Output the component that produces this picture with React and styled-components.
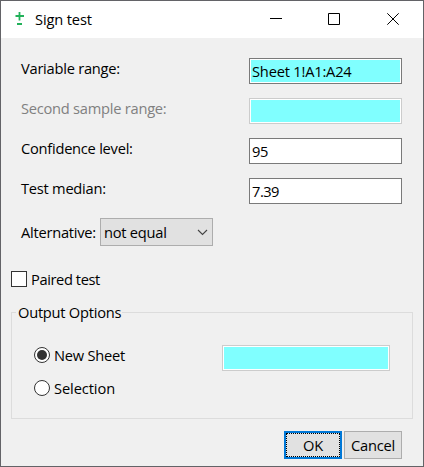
import React from "react";
import styled, { createGlobalStyle } from "styled-components";

const GlobalStyle = createGlobalStyle`
  * { box-sizing: border-box; }
  body { margin: 0; }
`;

const Dialog = styled.main`
  width: 424px;
  height: 467px;
  overflow: hidden;
  border: 1px solid #636367;
  background: #f0f0f0;
  color: #000;
  font: 14.67px/20px "Open Sans", "Noto Sans", sans-serif;
  white-space: nowrap;
`;

const TitleBar = styled.header`
  display: flex;
  align-items: center;
  height: 37px;
  padding: 0 0 1px 14px;
  background: #fff;
`;

const Title = styled.h1`
  flex: 1;
  margin: 0 0 0 10px;
  font: inherit;
  letter-spacing: -0.15px;
`;

const WindowControls = styled.div`
  display: grid;
  grid-template-columns: 58px 59px 12px;
  margin-right: 24px;
`;

const Glyph = styled.svg`
  display: block;
  fill: none;
  stroke: #000;
`;

const Text = styled.span`
  letter-spacing: ${(p) => p.$spacing ?? -0.25}px;
`;

const Form = styled.section`
  display: grid;
  gap: 14px;
  padding: 20px 21px 0 20px;
`;

const Row = styled.label`
  display: flex;
  justify-content: space-between;
  height: 26px;
  color: ${(p) => (p.$disabled ? "#808080" : "#000")};
`;

const Field = styled.div`
  width: ${(p) => p.$width || 153}px;
  height: 26px;
  padding: 2px 0 0 2px;
  border: 1px solid ${(p) => (p.$disabled ? "#ccc" : "#7a7a7a")};
  background: ${(p) => (p.$range ? "#80ffff" : "#fff")};
  box-shadow: inset 0 0 0 1px #fff;
`;

const SelectRow = styled.div`
  display: flex;
  align-items: center;
  height: 28px;
  margin: 14px 0 0 20px;
`;

const SelectLabel = styled.span`
  width: 79px;
`;

const Select = styled.div`
  display: flex;
  align-items: center;
  justify-content: space-between;
  width: 113px;
  height: 28px;
  padding: 0 4px 0 3px;
  border: 1px solid #adadad;
  background: #e1e1e1;
`;

const CheckRow = styled.label`
  display: flex;
  align-items: center;
  gap: 4px;
  height: 16px;
  margin: 25px 0 0 10px;
`;

const CheckBox = styled.span`
  width: 16px;
  height: 16px;
  border: 1px solid #333;
  background: #fff;
`;

const Group = styled.fieldset`
  height: 117px;
  margin: 15px 10px 0;
  padding: 0 22px;
  border: 1px solid #dcdcdc;
  min-width: 0;
`;

const Legend = styled.legend`
  width: 106px;
  height: 21px;
  margin-left: -18px;
  padding: 0 0 0 2px;
`;

const GroupRow = styled.div`
  display: flex;
  justify-content: space-between;
  align-items: flex-start;
  height: 26px;
  margin-top: ${(p) => p.$top}px;
`;

const RadioLabel = styled.label`
  display: flex;
  align-items: center;
  gap: 4px;
  height: 20px;
`;

const Radio = styled.span`
  display: grid;
  place-items: center;
  width: 16px;
  height: 16px;
  border: 1px solid #333;
  border-radius: 50%;
  background: #fff;
`;

const Dot = styled.span`
  width: 10px;
  height: 10px;
  border-radius: 50%;
  background: #333;
`;

const Actions = styled.footer`
  display: flex;
  justify-content: flex-end;
  gap: 2px;
  margin: 12px 21px 0 0;
`;

const Button = styled.button`
  width: 58px;
  height: 28px;
  padding: 0;
  border: ${(p) => (p.$primary ? "2px solid #0078d7" : "1px solid #adadad")};
  background: #e1e1e1;
  color: #000;
  font: inherit;
  outline: ${(p) => (p.$primary ? "1px dotted #000" : "none")};
  outline-offset: -3px;
`;

export default function App() {
  return (
    <>
      <GlobalStyle />
      <Dialog>
        <TitleBar>
          <Glyph width="10" height="16" viewBox="0 0 10 16">
            <path d="M4.5 1V9.5M.5 5H9M2 13H7" stroke="#22b15a" strokeWidth="1.8" />
          </Glyph>
          <Title>Sign test</Title>
          <WindowControls>
            <Glyph width="12" height="12"><path d="M0 5.5H12" /></Glyph>
            <Glyph width="12" height="12"><path d="M.5 .5H11.5V11.5H.5Z" /></Glyph>
            <Glyph width="12" height="12"><path d="M.3 .3L11.7 11.7M11.7 .3L.3 11.7" /></Glyph>
          </WindowControls>
        </TitleBar>
        <Form>
          <Row><Text>Variable range:</Text><Field $range><Text $spacing={-0.2}>Sheet 1!A1:A24</Text></Field></Row>
          <Row $disabled><Text>Second sample range:</Text><Field $range $disabled /></Row>
          <Row><Text>Confidence level:</Text><Field><Text $spacing={-0.5}>95</Text></Field></Row>
          <Row><Text>Test median:</Text><Field><Text $spacing={-0.5}>7.39</Text></Field></Row>
        </Form>
        <SelectRow>
          <SelectLabel><Text>Alternative:</Text></SelectLabel>
          <Select>
            <Text>not equal</Text>
            <Glyph width="11" height="7"><path d="M1 1L5.5 5.5L10 1" stroke="#444" strokeWidth="1.1" /></Glyph>
          </Select>
        </SelectRow>
        <CheckRow><CheckBox /><Text $spacing={-0.4}>Paired test</Text></CheckRow>
        <Group>
          <Legend><Text>Output Options</Text></Legend>
          <GroupRow $top={22}>
            <RadioLabel><Radio><Dot /></Radio><Text>New Sheet</Text></RadioLabel>
            <Field $width={168} $range $disabled />
          </GroupRow>
          <GroupRow $top={7}>
            <RadioLabel><Radio /><Text $spacing={-0.1}>Selection</Text></RadioLabel>
          </GroupRow>
        </Group>
        <Actions>
          <Button $primary><Text>OK</Text></Button>
          <Button><Text>Cancel</Text></Button>
        </Actions>
      </Dialog>
    </>
  );
}
